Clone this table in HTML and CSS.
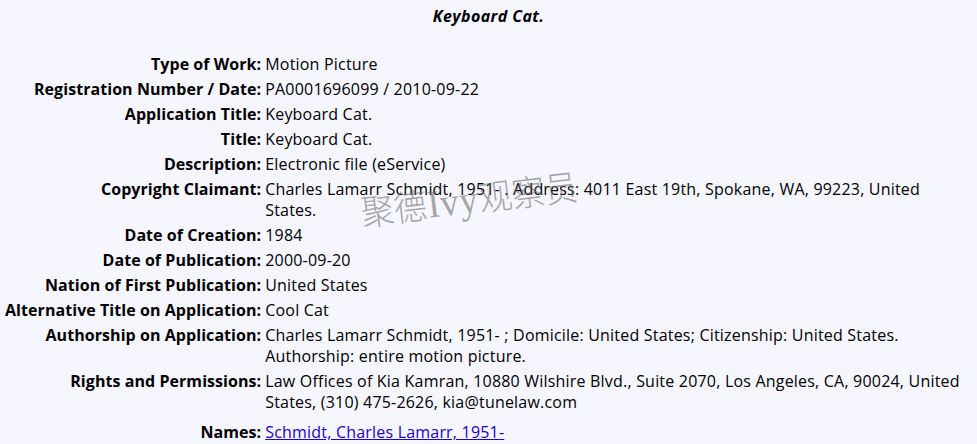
FILE: index.html
```html
<!DOCTYPE html>
<html>
<head>
<meta charset="utf-8">
<title>Keyboard Cat.</title>
<link rel="stylesheet" href="styles.css">
</head>
<body>
<main class="page">
  <h1 class="title">Keyboard Cat.</h1>
  <div class="record">
    <div class="label">Type of Work:</div><div class="value">Motion Picture</div>
    <div class="label">Registration Number / Date:</div><div class="value">PA0001696099 / 2010-09-22</div>
    <div class="label">Application Title:</div><div class="value">Keyboard Cat.</div>
    <div class="label">Title:</div><div class="value">Keyboard Cat.</div>
    <div class="label">Description:</div><div class="value">Electronic file (eService)</div>
    <div class="label">Copyright Claimant:</div><div class="value">Charles Lamarr Schmidt, 1951- . Address: 4011 East 19th, Spokane, WA, 99223, United States.</div>
    <div class="label">Date of Creation:</div><div class="value">1984</div>
    <div class="label">Date of Publication:</div><div class="value">2000-09-20</div>
    <div class="label">Nation of First Publication:</div><div class="value">United States</div>
    <div class="label">Alternative Title on Application:</div><div class="value">Cool Cat</div>
    <div class="label">Authorship on Application:</div><div class="value">Charles Lamarr Schmidt, 1951- ; Domicile: United States; Citizenship: United States. Authorship: entire motion picture.</div>
    <div class="label">Rights and Permissions:</div><div class="value">Law Offices of Kia Kamran, 10880 Wilshire Blvd., Suite 2070, Los Angeles, CA, 90024, United States, (310) 475-2626, kia@tunelaw.com</div>
    <div class="label names">Names:</div><div class="value names"><a href="#">Schmidt, Charles Lamarr, 1951-</a></div>
  </div>
  <div class="watermark">聚德<span class="latin">Ivy</span>观察员</div>
</main>
</body>
</html>
```
FILE: styles.css
```css
html, body {
  margin: 0;
  padding: 0;
  background: #f5f6ff;
}

body {
  font-family: "Open Sans", "Noto Sans", sans-serif;
  font-size: 16px;
  color: #000;
}

.page {
  position: relative;
  width: 977px;
  height: 444px;
  overflow: hidden;
}

.title {
  margin: 0;
  padding-top: 6px;
  font-size: 16px;
  line-height: 21px;
  font-weight: 700;
  font-style: italic;
  text-align: center;
  letter-spacing: 0.4px;
}

.record {
  display: grid;
  grid-template-columns: max-content 1fr;
  column-gap: 4px;
  padding: 0 9px 0 5px;
  margin-top: 25px;
}

.label,
.value {
  padding: 2px 0;
  line-height: 21px;
}

.label {
  font-weight: 700;
  text-align: right;
  letter-spacing: 0.06px;
}

.value {
  letter-spacing: 0.2px;
}

.label.names,
.value.names {
  padding-top: 7px;
}

.value a {
  color: #2200cc;
  text-decoration: underline;
}

.watermark {
  position: absolute;
  left: 361px;
  top: 192px;
  font-family: "Noto Sans CJK SC", serif;
  font-size: 33px;
  line-height: 38px;
  font-weight: 300;
  color: rgba(110, 110, 110, 0.6);
  white-space: nowrap;
  transform: rotate(-7deg) scaleY(1.08);
  transform-origin: left center;
  pointer-events: none;
}

.watermark .latin {
  font-family: "Liberation Serif", serif;
  font-size: 36px;
  font-weight: 400;
  letter-spacing: 1px;
  margin: 0 1px;
}
```
